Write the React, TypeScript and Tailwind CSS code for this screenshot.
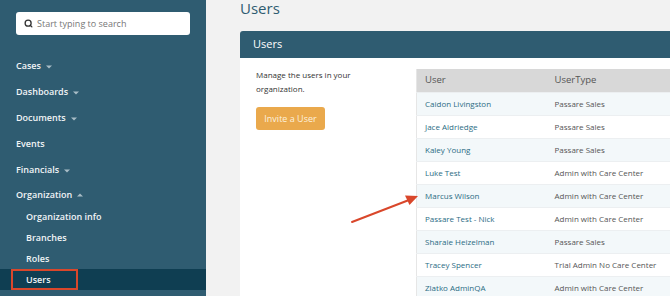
import { Search } from 'lucide-react';

const users: [string, string][] = [
  ['Caidon Livingston', 'Passare Sales'],
  ['Jace Aldriedge', 'Passare Sales'],
  ['Kaley Young', 'Passare Sales'],
  ['Luke Test', 'Admin with Care Center'],
  ['Marcus Wilson', 'Admin with Care Center'],
  ['Passare Test - Nick', 'Admin with Care Center'],
  ['Sharaie Heizelman', 'Passare Sales'],
  ['Tracey Spencer', 'Trial Admin No Care Center'],
  ['Zlatko AdminQA', 'Admin with Care Center'],
];

const navItems = ['Cases', 'Dashboards', 'Documents', 'Events', 'Financials'];
const hasCaret = ['Cases', 'Dashboards', 'Documents', 'Financials'];

function Caret({ up = false }: { up?: boolean }) {
  return (
    <svg width="6" height="4" viewBox="0 0 6 4" className="ml-[5px] mt-[1px]">
      <path d={up ? 'M0 3.5 L3 0.5 L6 3.5 Z' : 'M0 0.5 L6 0.5 L3 3.5 Z'} fill="#a9bdc7" />
    </svg>
  );
}

export default function App() {
  return (
    <div className="relative flex h-[296px] w-[670px] overflow-hidden font-['Open_Sans',sans-serif]">
      {/* Sidebar */}
      <aside className="w-[206px] shrink-0 bg-[#2f5c71]">
        <div className="mx-4 mt-3 flex h-[23px] items-center rounded-[3px] bg-white pl-[8px]">
          <Search size={9} strokeWidth={3.5} className="text-[#333]" />
          <span className="ml-[4px] text-[9px] text-[#777]">Start typing to search</span>
        </div>

        <nav className="mt-[18px] text-[9px] font-semibold text-[#f1f4f6]">
          {navItems.map(item => (
            <div key={item} className="flex h-[26px] items-center pl-4">
              {item}
              {hasCaret.includes(item) && <Caret />}
            </div>
          ))}
          <div className="flex h-[23px] items-center pl-4">
            Organization
            <Caret up />
          </div>
          <div className="flex h-[21px] items-center pl-[26px]">Organization info</div>
          <div className="flex h-[21px] items-center pl-[26px]">Branches</div>
          <div className="flex h-[21px] items-center pl-[26px]">Roles</div>
          <div className="flex h-[21px] items-stretch bg-[#0f3e52] pl-[11px]">
            <div className="flex w-[67px] items-center border-2 border-[#d9472b] pl-[13px]">Users</div>
          </div>
        </nav>
      </aside>

      {/* Main */}
      <main className="flex-1 bg-[#f2f2f2] pl-[34px]">
        <h1 className="h-[31px] pt-[1px] text-[15px] leading-none text-[#2f5c71]">Users</h1>

        <section className="w-[520px]">
          <div className="flex h-[27px] items-center rounded-tl-[3px] bg-[#2f5c71] pl-[13px] text-[11px] text-white">
            Users
          </div>
          <div className="flex bg-white">
            <div className="w-[176px] shrink-0 pl-4 pr-2 pt-[10px]">
              <p className="text-[8px] leading-[13.5px] text-[#333]">
                Manage the users in your
                <br />
                organization.
              </p>
              <button className="mt-[12px] flex h-[23px] w-[69px] items-center justify-center rounded-[3px] bg-[#eaa94c] text-[9px] text-[#fdf1de]">
                Invite a User
              </button>
            </div>

            <table className="mt-[11px] w-full border-l border-[#e6e6e6] text-left text-[8px]">
              <thead>
                <tr className="h-[23px] bg-[#d8d8d8] text-[9.5px] text-[#555]">
                  <th className="w-[138px] pl-2 font-normal">User</th>
                  <th className="font-normal">UserType</th>
                </tr>
              </thead>
              <tbody>
                {users.map(([name, type], i) => (
                  <tr
                    key={name}
                    className={`h-[23px] border-t border-[#eceff1] ${i % 2 === 0 ? 'bg-[#f3f8fa]' : 'bg-white'}`}
                  >
                    <td className="pl-2 text-[#2b6c84]">{name}</td>
                    <td className="text-[#555]">{type}</td>
                  </tr>
                ))}
              </tbody>
            </table>
          </div>
        </section>
      </main>

      {/* Annotation arrow */}
      <svg className="pointer-events-none absolute left-0 top-0" width="670" height="296">
        <line x1="352" y1="222" x2="409" y2="200" stroke="#d9472b" strokeWidth="2" strokeLinecap="round" />
        <path d="M418 196 L405 195.5 L409.5 205 Z" fill="#d9472b" />
      </svg>
    </div>
  );
}
